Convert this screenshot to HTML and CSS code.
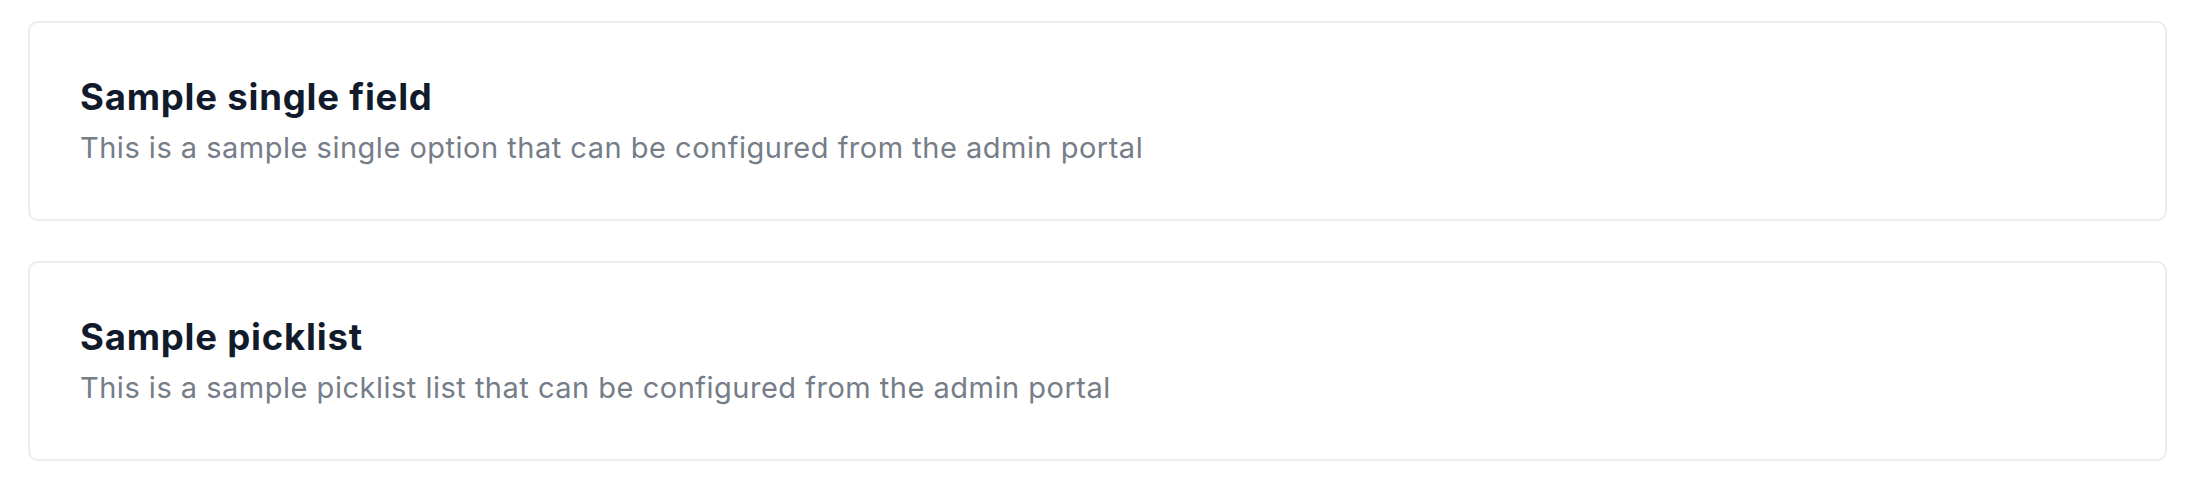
FILE: index.html
```html
<!DOCTYPE html>
<html lang="en">
<head>
  <meta charset="UTF-8">
  <title>Options</title>
  <meta name="viewport" content="width=device-width, initial-scale=1.0">
  <link rel="stylesheet" href="styles.css">
</head>
<body>

<div class="option-list">
  <div class="option-card">
    <h3>Sample single field</h3>
    <p>This is a sample single option that can be configured from the admin portal</p>
  </div>

  <div class="option-card">
    <h3>Sample picklist</h3>
    <p>This is a sample picklist list that can be configured from the admin portal</p>
  </div>
</div>

</body>
</html>
```

FILE: styles.css
```css
body {
  margin: 0;
  font-family: 'Inter', sans-serif;
  background: #fff;
}

.option-list {
  display: flex;
  flex-direction: column;
  gap: 40px;
  padding: 21px 25px 0 28px;
}

.option-card {
  border: 2px solid #ebecef;
  border-radius: 10px;
  padding: 49px 50px 46px;
}

.option-card h3 {
  margin: 0;
  font-size: 36.5px;
  line-height: 51px;
  font-weight: 700;
  letter-spacing: 0.8px;
  color: #111b2b;
}

.option-card p {
  margin: 0;
  font-size: 29px;
  line-height: 50px;
  letter-spacing: 0.5px;
  color: #757d88;
}
```
